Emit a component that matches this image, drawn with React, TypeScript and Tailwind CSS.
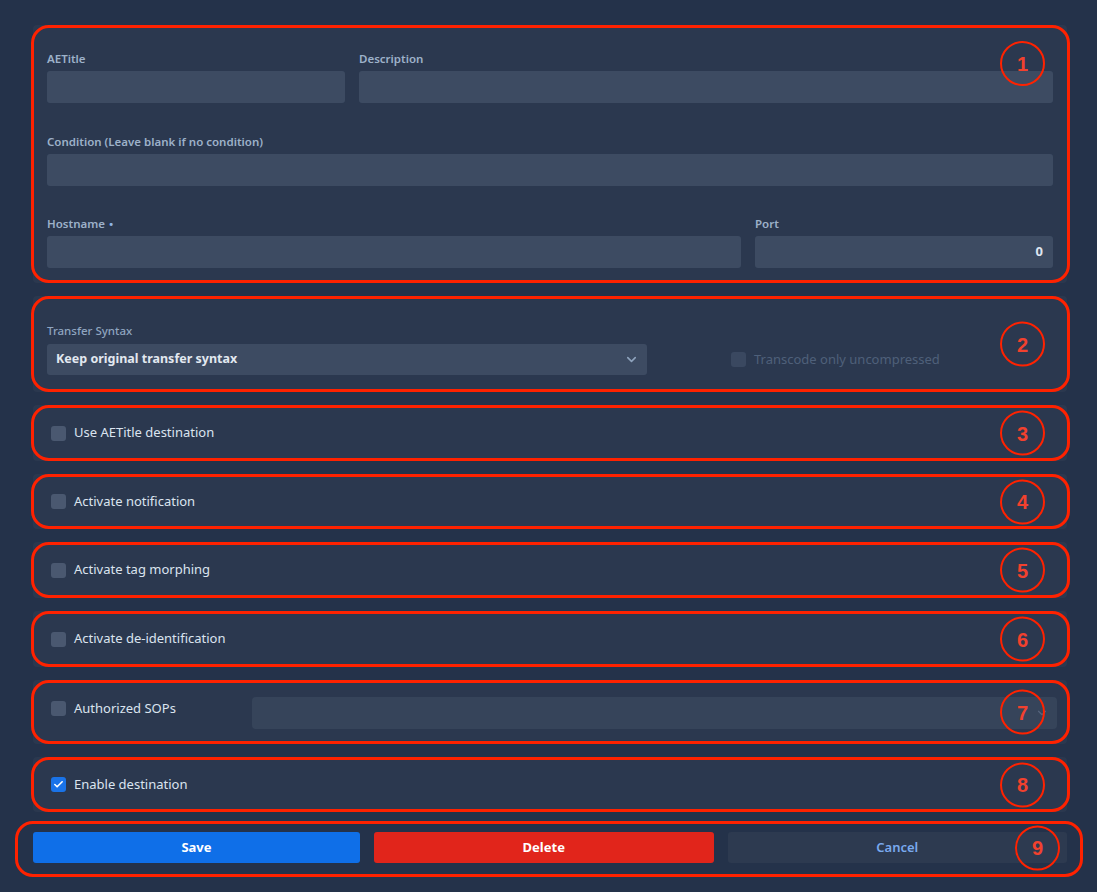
import { Check, ChevronDown } from 'lucide-react'

const font = { fontFamily: '"Noto Sans", "Open Sans", sans-serif' }

// red annotation: outline round the block plus a numbered circle
function Mark({ n, top, wide }: { n: number; top?: boolean; wide?: boolean }) {
  return (
    <>
      <div
        className={
          wide
            ? 'pointer-events-none absolute -left-[18px] -right-[16px] -top-[11px] -bottom-[14px] rounded-[18px] border-[3px] border-[#ff2200]'
            : 'pointer-events-none absolute -left-[2px] -right-[3px] top-0 bottom-0 rounded-[18px] border-[3px] border-[#ff2200]'
        }
      />
      <div
        className={
          'pointer-events-none absolute flex h-[45px] w-[45px] items-center justify-center rounded-full border-[2.5px] border-[#ff2200] ' +
          (wide
            ? 'right-[7px] top-1/2 -translate-y-1/2'
            : top
              ? 'right-[22px] top-[16px]'
              : 'right-[22px] top-1/2 -translate-y-1/2')
        }
      >
        <span
          className="text-[20px] font-bold leading-none text-[#f2412e]"
          style={{ fontFamily: '"Liberation Sans", Arial, sans-serif' }}
        >
          {n}
        </span>
      </div>
    </>
  )
}

function Field({ label, className = '', value, dot }: { label: string; className?: string; value?: string; dot?: boolean }) {
  return (
    <div className={'flex flex-col ' + className}>
      <label className="mb-[4px] h-[16px] text-[11.5px] font-semibold leading-[16px] text-[#9db1c9]">
        {label}
        {dot && <span className="ml-1 text-[#8fb4e6]">•</span>}
      </label>
      <div className="flex h-[32px] items-center justify-end rounded-[3px] bg-[#3d4b62] px-[10px] text-[13px] font-bold text-[#dde5f0]">
        {value}
      </div>
    </div>
  )
}

function Box({ checked }: { checked?: boolean }) {
  return checked ? (
    <span className="flex h-[15px] w-[15px] shrink-0 items-center justify-center rounded-[3px] bg-[#1a73e8]">
      <Check size={11} strokeWidth={3.5} className="text-white" />
    </span>
  ) : (
    <span className="h-[15px] w-[15px] shrink-0 rounded-[3px] bg-[#4a5870]" />
  )
}

function CheckRow({ n, label, checked, short }: { n: number; label: string; checked?: boolean; short?: boolean }) {
  return (
    <div
      className={
        'relative flex items-center gap-[8px] rounded-[4px] bg-[#2b384f] pl-[18px] ' + (short ? 'h-[55px]' : 'h-[56px]')
      }
    >
      <Box checked={checked} />
      <span className="text-[13px] text-[#dbe4ef]">{label}</span>
      <Mark n={n} />
    </div>
  )
}

export default function App() {
  return (
    <div className="min-h-[892px] w-full bg-[#24324a] pl-[33px] pr-[30px] pt-[25px]" style={font}>
      <div className="flex flex-col gap-[13px]">
        <div className="relative h-[258px] rounded-[4px] bg-[#2b384f] px-[14px] pt-[26px]">
          <div className="flex gap-[14px]">
            <Field label="AETitle" className="w-[298px]" />
            <Field label="Description" className="flex-1" />
          </div>
          <Field label="Condition (Leave blank if no condition)" className="mt-[31px]" />
          <div className="mt-[30px] flex gap-[14px]">
            <Field label="Hostname" dot className="flex-1" />
            <Field label="Port" value="0" className="w-[298px]" />
          </div>
          <Mark n={1} top />
        </div>

        <div className="relative h-[96px] rounded-[4px] bg-[#2b384f] px-[14px] pt-[27px]">
          <div className="flex items-end">
            <div className="flex w-[600px] flex-col">
              <label className="mb-[5px] h-[16px] text-[11.5px] font-medium leading-[16px] text-[#8fa5c0]">Transfer Syntax</label>
              <div className="flex h-[31px] items-center justify-between rounded-[3px] bg-[#3d4b62] pl-[9px] pr-[8px]">
                <span className="text-[12.5px] font-bold text-[#e2e8f0]">Keep original transfer syntax</span>
                <ChevronDown size={15} strokeWidth={2.5} className="text-[#8fa3bd]" />
              </div>
            </div>
            <div className="ml-[84px] flex h-[31px] items-center gap-[8px]">
              <span className="h-[15px] w-[15px] rounded-[3px] bg-[#3a4860]" />
              <span className="text-[13px] text-[#4f607a]">Transcode only uncompressed</span>
            </div>
          </div>
          <Mark n={2} />
        </div>

        <CheckRow n={3} label="Use AETitle destination" />
        <CheckRow n={4} label="Activate notification" short />
        <CheckRow n={5} label="Activate tag morphing" />
        <CheckRow n={6} label="Activate de-identification" />

        <div className="relative flex h-[64px] items-start rounded-[4px] bg-[#2b384f] pl-[18px] pr-[10px] pt-[17px]">
          <div className="flex w-[201px] items-center gap-[8px] pt-[2px]">
            <Box />
            <span className="text-[13px] text-[#dbe4ef]">Authorized SOPs</span>
          </div>
          <div className="flex h-[32px] flex-1 items-center justify-end rounded-[4px] bg-[#36445a] pr-[8px]">
            <ChevronDown size={14} strokeWidth={2} className="text-[#56657d]" />
          </div>
          <Mark n={7} />
        </div>

        <CheckRow n={8} label="Enable destination" checked short />
      </div>

      <div className="relative mt-[20px] flex gap-[14px]">
        <button className="h-[31px] w-[327px] rounded-[3px] bg-[#0f6fe8] text-[13px] font-bold text-white">Save</button>
        <button className="h-[31px] flex-1 rounded-[3px] bg-[#e1251b] text-[13px] font-bold text-white">Delete</button>
        <button className="h-[31px] flex-1 rounded-[3px] bg-[#2d3a50] text-[13px] font-semibold text-[#79a9ee]">Cancel</button>
        <Mark n={9} wide />
      </div>
    </div>
  )
}
